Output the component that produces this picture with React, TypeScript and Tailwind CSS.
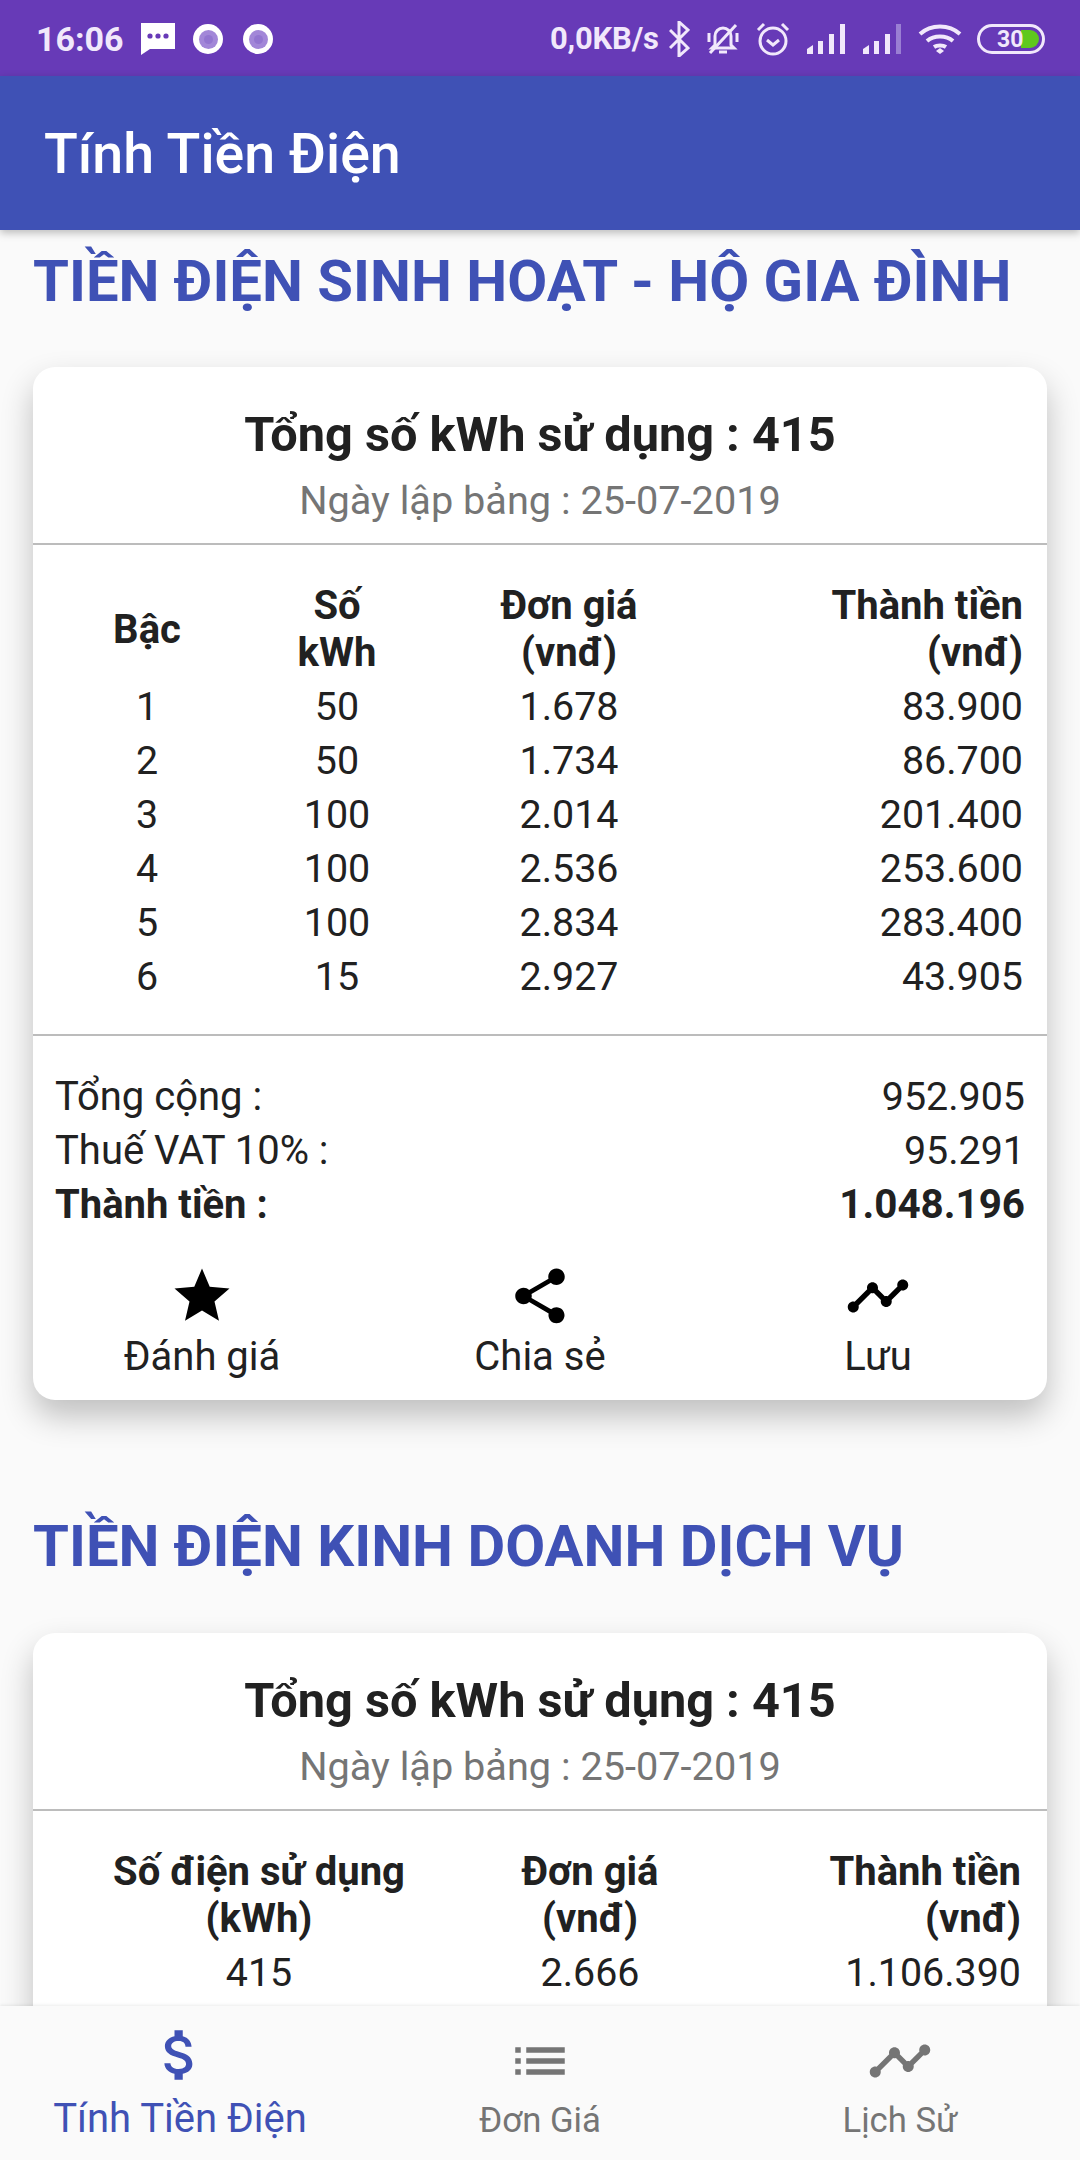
import { MdStar, MdShare, MdTimeline, MdAttachMoney, MdList } from "react-icons/md";

const tiers = [
  ["1", "50", "1.678", "83.900"],
  ["2", "50", "1.734", "86.700"],
  ["3", "100", "2.014", "201.400"],
  ["4", "100", "2.536", "253.600"],
  ["5", "100", "2.834", "283.400"],
  ["6", "15", "2.927", "43.905"],
];

function StatusBar() {
  return (
    <div className="h-[76px] shrink-0 bg-[#673ab7] flex items-center text-[#f1e8fb] font-bold pl-[36px] pt-[2px]">
      <span className="w-[88px] text-[34px]">16:06</span>
      <svg className="ml-[17px]" width="34" height="32" viewBox="0 0 34 32">
        <path d="M0 0h34v26H9l-9 6z" fill="#fff" />
        <circle cx="9" cy="13" r="2.6" fill="#673ab7" />
        <circle cx="17" cy="13" r="2.6" fill="#673ab7" />
        <circle cx="25" cy="13" r="2.6" fill="#673ab7" />
      </svg>
      <RecordDot className="ml-[18px]" />
      <RecordDot className="ml-[20px]" />
      <span className="ml-[277px] w-[111px] text-[31px] tracking-[-0.2px] whitespace-nowrap">0,0KB/s</span>
      <svg className="ml-[8px]" width="21" height="36" viewBox="0 0 21 36" fill="none" stroke="#f1e8fb" strokeWidth="3">
        <path d="M1 9l18 18-9 8V1l9 8L1 27" />
      </svg>
      <svg className="ml-[16px]" width="34" height="32" viewBox="0 0 34 32" fill="none" stroke="#f1e8fb" strokeWidth="3">
        <path d="M9 22V13a8 8 0 0 1 16 0v9l3 3H6z" />
        <path d="M13 29h8M3 10v9M31 10v9M4 30L30 2" />
      </svg>
      <svg className="ml-[16px]" width="34" height="34" viewBox="0 0 34 34" fill="none" stroke="#f1e8fb" strokeWidth="3">
        <circle cx="17" cy="19" r="13" />
        <path d="M11 18l6 5 6-5M2 8l6-6M32 8l-6-6" />
      </svg>
      <SignalBars className="ml-[17px]" />
      <SignalBars className="ml-[16px]" weak />
      <svg className="ml-[15px]" width="44" height="30" viewBox="0 0 44 30" fill="none" stroke="#f1e8fb" strokeWidth="4">
        <path d="M2 10c11-10 29-10 40 0M9 17c7-6 19-6 26 0M16 23c3-2 9-2 12 0" />
        <path d="M18 27l4-3 4 3-4 3z" fill="#f1e8fb" stroke="none" />
      </svg>
      <div className="ml-[15px] w-[68px] h-[30px] rounded-full border-[3px] border-[#f1e8fb] relative flex items-center overflow-hidden">
        <div className="absolute right-[3px] top-[3px] w-[18px] h-[18px] rounded-r-full bg-[#5fc81e]" />
        <span className="relative pl-[17px] text-[23px] leading-none text-[#f1e8fb]">30</span>
      </div>
    </div>
  );
}

function RecordDot({ className }: { className: string }) {
  return (
    <div className={`${className} w-[30px] h-[30px] rounded-full bg-white flex items-center justify-center`}>
      <div className="w-[19px] h-[19px] rounded-full bg-[#a287d8] flex items-center justify-center">
        <div className="w-[9px] h-[9px] rounded-full bg-[#9275d0]" />
      </div>
    </div>
  );
}

function SignalBars({ className, weak }: { className: string; weak?: boolean }) {
  return (
    <svg className={className} width="40" height="30" viewBox="0 0 40 30">
      <path d="M0 30v-5l6-4v9z" fill="#f1e8fb" />
      <rect x="11" y="17" width="5" height="13" fill="#f1e8fb" />
      <rect x="22" y="10" width="5" height="20" fill="#f1e8fb" />
      <rect x="33" y="0" width="5" height="30" fill={weak ? "#9a7fd3" : "#f1e8fb"} />
    </svg>
  );
}

function AppBar() {
  return (
    <div className="h-[154px] shrink-0 bg-[#3f51b5] flex items-center pl-[44px] pt-[3px] text-white text-[55.5px] font-medium shadow-[0_3px_8px_rgba(0,0,0,0.25)] relative z-10">
      Tính Tiền Điện
    </div>
  );
}

function Divider() {
  return <div className="h-[2px] bg-[#bcbcbc]" />;
}

function CardHeader() {
  return (
    <>
      <div className="pt-[38px] text-center text-[48.7px] leading-[60px] font-bold text-[#212121]">
        Tổng số kWh sử dụng : 415
      </div>
      <div className="mt-[9px] mb-[15px] text-center text-[39.7px] leading-[54px] text-[#757575]">
        Ngày lập bảng : 25-07-2019
      </div>
      <Divider />
    </>
  );
}

function ResidentialCard() {
  return (
    <div className="mx-[33px] h-[1033px] bg-white rounded-[22px] shadow-[0_16px_32px_rgba(0,0,0,0.24)]">
      <CardHeader />
      <div className="pt-[37px] pl-[22px] pr-[24px] text-[39.4px] text-[#212121]">
        <div className="grid grid-cols-[184px_196px_268px_1fr] items-center text-center font-bold text-[40px] leading-[47px] mb-[4px]">
          <div>Bậc</div>
          <div>
            Số
            <br />
            kWh
          </div>
          <div>
            Đơn giá
            <br />
            (vnđ)
          </div>
          <div className="text-right">
            Thành tiền
            <br />
            (vnđ)
          </div>
        </div>
        {tiers.map((t) => (
          <div key={t[0]} className="grid grid-cols-[184px_196px_268px_1fr] text-center leading-[54px]">
            <div>{t[0]}</div>
            <div>{t[1]}</div>
            <div>{t[2]}</div>
            <div className="text-right">{t[3]}</div>
          </div>
        ))}
      </div>
      <div className="mt-[30px]">
        <Divider />
      </div>
      <div className="pt-[34px] pl-[22px] pr-[22px] leading-[54px] text-[#212121]">
        <div className="flex justify-between">
          <span className="text-[40px]">Tổng cộng :</span>
          <span className="text-[39.4px]">952.905</span>
        </div>
        <div className="flex justify-between">
          <span className="text-[40px]">Thuế VAT 10% :</span>
          <span className="text-[39.4px]">95.291</span>
        </div>
        <div className="flex justify-between font-bold">
          <span className="text-[40px]">Thành tiền :</span>
          <span className="text-[40.4px]">1.048.196</span>
        </div>
      </div>
      <div className="mt-[31px] grid grid-cols-3 text-center text-[40px] leading-[54px] text-[#212121]">
        <Action icon={<MdStar size={66} color="#000" />} label="Đánh giá" />
        <Action icon={<MdShare size={66} color="#000" />} label="Chia sẻ" />
        <Action icon={<MdTimeline size={66} color="#000" />} label="Lưu" />
      </div>
    </div>
  );
}

function Action({ icon, label }: { icon: React.ReactNode; label: string }) {
  return (
    <div className="flex flex-col items-center">
      {icon}
      <span className="mt-[1px]">{label}</span>
    </div>
  );
}

function BusinessCard() {
  return (
    <div className="mx-[33px] h-[500px] bg-white rounded-[22px] shadow-[0_16px_32px_rgba(0,0,0,0.24)]">
      <CardHeader />
      <div className="pt-[37px] pl-[22px] pr-[26px] text-[39.4px] text-[#212121]">
        <div className="grid grid-cols-[408px_254px_1fr] text-center font-bold text-[40px] leading-[47px] mb-[4px]">
          <div>
            Số điện sử dụng
            <br />
            (kWh)
          </div>
          <div>
            Đơn giá
            <br />
            (vnđ)
          </div>
          <div className="text-right">
            Thành tiền
            <br />
            (vnđ)
          </div>
        </div>
        <div className="grid grid-cols-[408px_254px_1fr] text-center leading-[54px]">
          <div>415</div>
          <div>2.666</div>
          <div className="text-right">1.106.390</div>
        </div>
      </div>
    </div>
  );
}

function BottomNav() {
  return (
    <div className="h-[154px] shrink-0 bg-[#fafafa] grid grid-cols-3 text-center shadow-[0_-1px_3px_rgba(0,0,0,0.08)] relative z-10">
      <div className="flex flex-col items-center pt-[16px] text-[#3f51b5]">
        <MdAttachMoney size={66} />
        <span className="text-[40px] leading-[46px] mt-[8px]">Tính Tiền Điện</span>
      </div>
      <div className="flex flex-col items-center pt-[22px] text-[#757575]">
        <MdList size={66} />
        <span className="text-[34.7px] leading-[42px] mt-[5px]">Đơn Giá</span>
      </div>
      <div className="flex flex-col items-center pt-[22px] text-[#757575]">
        <MdTimeline size={66} />
        <span className="text-[34.7px] leading-[42px] mt-[5px]">Lịch Sử</span>
      </div>
    </div>
  );
}

export default function App() {
  return (
    <div className="w-[1080px] h-[2160px] flex flex-col overflow-hidden bg-[#fafafa] font-['Roboto',sans-serif]">
      <StatusBar />
      <AppBar />
      <main className="flex-1 overflow-hidden">
        <h2 className="mt-[18px] mb-[53px] pl-[33px] text-[#3f51b5] font-bold text-[58px] leading-[66px] whitespace-nowrap">
          TIỀN ĐIỆN SINH HOẠT - HỘ GIA ĐÌNH
        </h2>
        <ResidentialCard />
        <h2 className="mt-[113px] mb-[54px] pl-[33px] text-[#3f51b5] font-bold text-[58px] leading-[66px] whitespace-nowrap">
          TIỀN ĐIỆN KINH DOANH DỊCH VỤ
        </h2>
        <BusinessCard />
      </main>
      <BottomNav />
    </div>
  );
}
